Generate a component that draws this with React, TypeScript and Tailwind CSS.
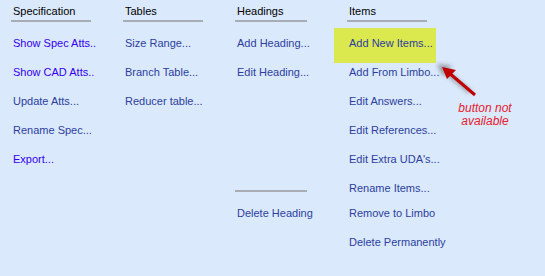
const dark = 'text-[#2b3f9e]';
const violet = 'text-[#3300f0]';

type Row = { label: string; cls?: string; mt?: string };

const Header = ({ title, w = 'w-[80px]' }: { title: string; w?: string }) => (
  <div className="h-[29px]">
    <div className="h-[19px] pl-[2px] pt-[4px] text-[11px] leading-[14px] text-black">{title}</div>
    <div className={`mt-[1px] h-[2px] bg-[#a9adb3] ${w}`} />
  </div>
);

const Item = ({ row }: { row: Row }) => (
  <div className={`flex h-[29px] items-center pl-[2px] text-[11px] ${row.cls ?? dark} ${row.mt ?? ''}`}>
    {row.label}
  </div>
);

const specRows: Row[] = [
  { label: 'Show Spec Atts..', cls: violet },
  { label: 'Show CAD Atts..', cls: violet },
  { label: 'Update Atts...' },
  { label: 'Rename Spec...' },
  { label: 'Export...', cls: violet },
];

const tableRows: Row[] = [
  { label: 'Size Range...' },
  { label: 'Branch Table...' },
  { label: 'Reducer table...' },
];

const itemRows: Row[] = [
  { label: 'Add New Items...' },
  { label: 'Add From Limbo...' },
  { label: 'Edit Answers...' },
  { label: 'Edit References...' },
  { label: "Edit Extra UDA's..." },
  { label: 'Rename Items...' },
  { label: 'Remove to Limbo', mt: '-mt-[4px]' },
  { label: 'Delete Permanently' },
];

export default function App() {
  return (
    <div
      className="relative h-[276px] w-[545px] overflow-hidden bg-[#dbe9fc]"
      style={{ fontFamily: '"Liberation Sans", Arial, sans-serif' }}
    >
      <div className="flex pl-[11px]">
        <div className="w-[112px]">
          <Header title="Specification" />
          {specRows.map((r) => (
            <Item key={r.label} row={r} />
          ))}
        </div>
        <div className="w-[112px]">
          <Header title="Tables" />
          {tableRows.map((r) => (
            <Item key={r.label} row={r} />
          ))}
        </div>
        <div className="w-[112px]">
          <Header title="Headings" w="w-[72px]" />
          <Item row={{ label: 'Add Heading...' }} />
          <Item row={{ label: 'Edit Heading...' }} />
          <div className="mt-[103px] h-[2px] w-[72px] bg-[#a9adb3]" />
          <Item row={{ label: 'Delete Heading', mt: 'mt-[7px]' }} />
        </div>
        <div className="relative w-[112px]">
          <div className="absolute left-[-13px] top-[28px] h-[35px] w-[102px] bg-[#dbe84e]" />
          <div className="relative">
            <Header title="Items" />
            {itemRows.map((r) => (
              <Item key={r.label} row={r} />
            ))}
          </div>
        </div>
      </div>

      <svg className="absolute left-0 top-0" width="545" height="276">
        <defs>
          <filter id="sh" x="-50%" y="-50%" width="200%" height="200%">
            <feGaussianBlur stdDeviation="2" />
          </filter>
        </defs>
        <g filter="url(#sh)" opacity="0.55">
          <line x1="470" y1="92" x2="440" y2="67" stroke="#555" strokeWidth="4" />
          <polygon points="437,64 452,66 443,76" fill="#555" />
        </g>
        <line x1="475" y1="95" x2="448" y2="72" stroke="#c00000" strokeWidth="3" />
        <polygon points="442,67 456,70 447,79" fill="#c00000" />
      </svg>

      <div className="absolute left-[452px] top-[102px] w-[66px] text-center text-[12px] italic leading-[13px] text-[#e5202e]">
        button not
        <br />
        available
      </div>
    </div>
  );
}
